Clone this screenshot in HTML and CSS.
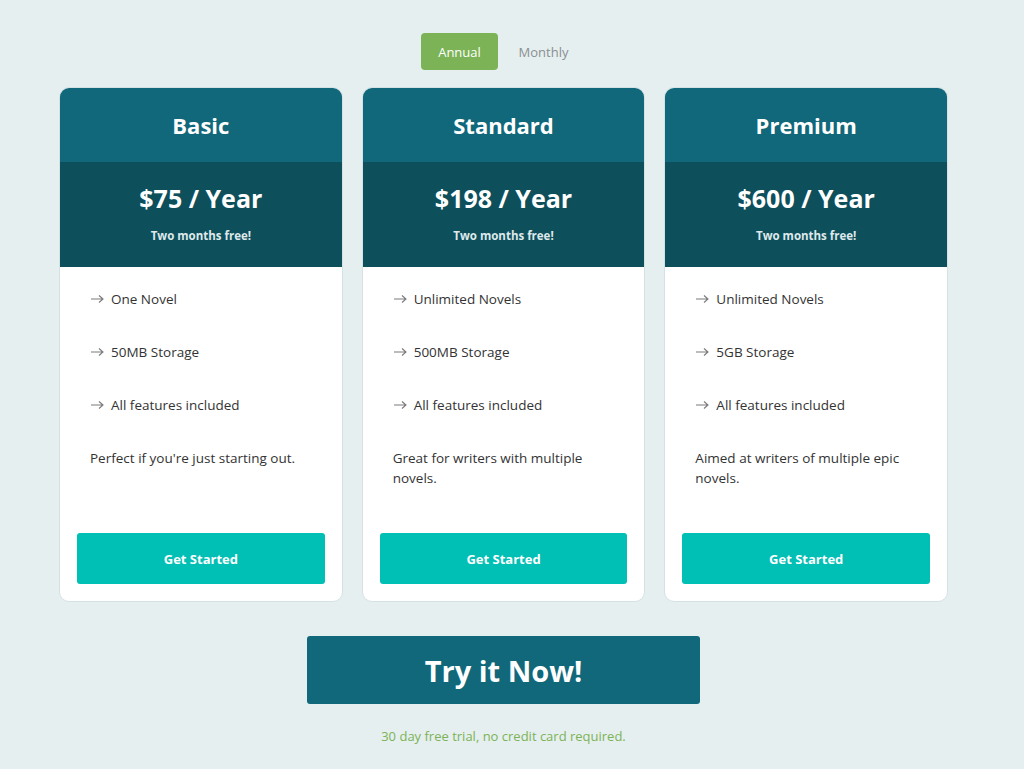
FILE: index.html
```html
<!DOCTYPE html>
<html lang="en">
<head>
  <meta charset="UTF-8">
  <meta name="viewport" content="width=device-width, initial-scale=1.0">
  <title>Pricing</title>
  <link rel="stylesheet" href="styles.css">
</head>
<body>
  <div class="page">
    <!-- Billing toggle -->
    <div class="toggle">
      <button class="toggle-btn active">Annual</button>
      <button class="toggle-btn">Monthly</button>
    </div>

    <!-- Plans -->
    <div class="plans">
      <div class="plan">
        <div class="plan-title">Basic</div>
        <div class="plan-price">
          <div class="price">$75 / Year</div>
          <div class="price-note">Two months free!</div>
        </div>
        <div class="plan-body">
          <ul class="features">
            <li><svg class="arrow" viewBox="0 0 14 10"><path d="M1 5H13M9 1.5L13 5L9 8.5"/></svg>One Novel</li>
            <li><svg class="arrow" viewBox="0 0 14 10"><path d="M1 5H13M9 1.5L13 5L9 8.5"/></svg>50MB Storage</li>
            <li><svg class="arrow" viewBox="0 0 14 10"><path d="M1 5H13M9 1.5L13 5L9 8.5"/></svg>All features included</li>
          </ul>
          <p class="plan-desc">Perfect if you're just starting out.</p>
          <button class="start-btn">Get Started</button>
        </div>
      </div>

      <div class="plan">
        <div class="plan-title">Standard</div>
        <div class="plan-price">
          <div class="price">$198 / Year</div>
          <div class="price-note">Two months free!</div>
        </div>
        <div class="plan-body">
          <ul class="features">
            <li><svg class="arrow" viewBox="0 0 14 10"><path d="M1 5H13M9 1.5L13 5L9 8.5"/></svg>Unlimited Novels</li>
            <li><svg class="arrow" viewBox="0 0 14 10"><path d="M1 5H13M9 1.5L13 5L9 8.5"/></svg>500MB Storage</li>
            <li><svg class="arrow" viewBox="0 0 14 10"><path d="M1 5H13M9 1.5L13 5L9 8.5"/></svg>All features included</li>
          </ul>
          <p class="plan-desc">Great for writers with multiple novels.</p>
          <button class="start-btn">Get Started</button>
        </div>
      </div>

      <div class="plan">
        <div class="plan-title">Premium</div>
        <div class="plan-price">
          <div class="price">$600 / Year</div>
          <div class="price-note">Two months free!</div>
        </div>
        <div class="plan-body">
          <ul class="features">
            <li><svg class="arrow" viewBox="0 0 14 10"><path d="M1 5H13M9 1.5L13 5L9 8.5"/></svg>Unlimited Novels</li>
            <li><svg class="arrow" viewBox="0 0 14 10"><path d="M1 5H13M9 1.5L13 5L9 8.5"/></svg>5GB Storage</li>
            <li><svg class="arrow" viewBox="0 0 14 10"><path d="M1 5H13M9 1.5L13 5L9 8.5"/></svg>All features included</li>
          </ul>
          <p class="plan-desc">Aimed at writers of multiple epic novels.</p>
          <button class="start-btn">Get Started</button>
        </div>
      </div>
    </div>

    <!-- Call to action -->
    <button class="try-btn">Try it Now!</button>
    <p class="trial-note">30 day free trial, no credit card required.</p>
  </div>
</body>
</html>
```

FILE: styles.css
```css
/* General Styles */
body {
  font-family: "Segoe UI", "Open Sans", sans-serif;
  background-color: #e6eff0;
  color: #333;
  margin: 0;
  padding: 0 17px 0 0;
}

.page {
  width: 889px;
  margin: 0 auto;
  padding-top: 33px;
  display: flex;
  flex-direction: column;
  align-items: center;
}

button {
  font-family: inherit;
  border: none;
  cursor: pointer;
}

/* Toggle */
.toggle {
  display: flex;
  gap: 7px;
  margin: 0 4px 17px 0;
}

.toggle-btn {
  width: 77px;
  height: 37px;
  font-size: 13px;
  color: #8a8f92;
  background: transparent;
  border-radius: 4px;
}

.toggle-btn.active {
  background-color: #7bb356;
  color: #ffffff;
}

/* Plans */
.plans {
  display: flex;
  gap: 19px;
  width: 100%;
}

.plan {
  flex: 1;
  display: flex;
  flex-direction: column;
  background-color: #ffffff;
  border: 1px solid #d5e2e5;
  border-radius: 10px;
  overflow: hidden;
}

.plan-title {
  height: 74px;
  line-height: 74px;
  text-align: center;
  background-color: #10687a;
  color: #ffffff;
  font-size: 22px;
  font-weight: 700;
}

.plan-price {
  height: 105px;
  background-color: #0d4f5b;
  color: #ffffff;
  text-align: center;
  box-sizing: border-box;
  padding-top: 18px;
}

.price {
  font-size: 25px;
  font-weight: 700;
  line-height: 36px;
}

.price-note {
  font-size: 11.5px;
  font-weight: 700;
  color: #dfe9eb;
  margin-top: 12px;
}

.plan-body {
  flex: 1;
  display: flex;
  flex-direction: column;
  padding: 22px 17px 17px;
}

.features {
  list-style: none;
  margin: 0;
  padding: 0 13px;
}

.features li {
  display: flex;
  align-items: center;
  font-size: 13.5px;
  line-height: 20px;
  margin-bottom: 33px;
}

.arrow {
  width: 14px;
  height: 10px;
  margin-right: 7px;
  fill: none;
  stroke: #7a7a7a;
  stroke-width: 1.1;
}

.plan-desc {
  font-size: 13.5px;
  line-height: 20px;
  margin: 0 0 45px;
  padding: 0 13px;
}

.start-btn {
  margin-top: auto;
  height: 51px;
  background-color: #00bfb4;
  color: #ffffff;
  font-size: 13px;
  font-weight: 700;
  border-radius: 3px;
}

/* Call to action */
.try-btn {
  margin-top: 34px;
  width: 393px;
  height: 68px;
  background-color: #10687a;
  color: #ffffff;
  font-size: 29px;
  font-weight: 700;
  border-radius: 3px;
}

.trial-note {
  margin: 23px 0 0;
  font-size: 13px;
  line-height: 18px;
  color: #7bb356;
}
```
